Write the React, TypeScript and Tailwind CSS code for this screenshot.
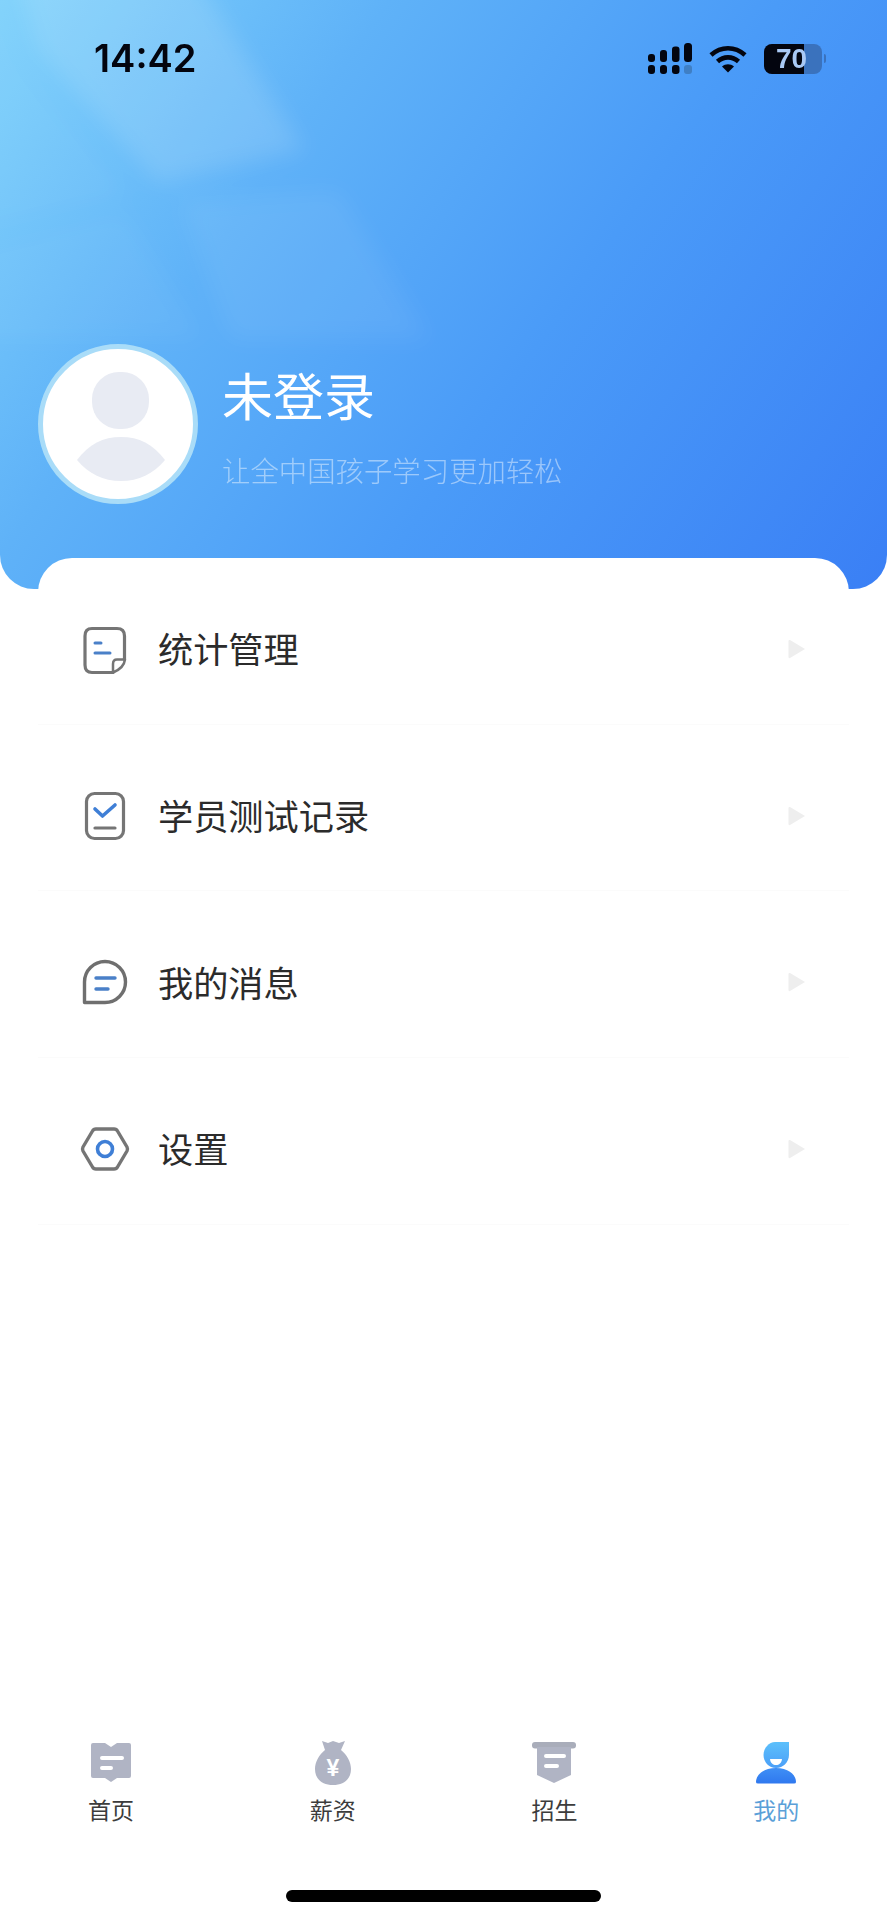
const CJK = 'font-["Noto_Sans_CJK_SC","Noto_Sans",sans-serif]'

function NoteIcon() {
  return (
    <svg className="mt-[3px]" width="46" height="50" viewBox="0 0 46 50" fill="none">
      <path d="M10 3.5H35Q42.5 3.5 42.5 11V34L31 47.5H10Q3 47.5 3 40V11Q3 3.5 10 3.5Z" stroke="#757575" strokeWidth="3.2" strokeLinejoin="round" />
      <path d="M31 47.5V39Q31 34.5 35 34.5H43Q42 43 31 47.5Z" fill="#fff" stroke="#757575" strokeWidth="2.5" strokeLinejoin="round" />
      <path d="M13 18H19M13 28H28" stroke="#4a80c8" strokeWidth="3" strokeLinecap="round" />
    </svg>
  )
}

function CheckIcon() {
  return (
    <svg width="46" height="52" viewBox="0 0 46 52" fill="none">
      <rect x="4.5" y="3.5" width="37" height="45" rx="8" stroke="#757575" strokeWidth="3.2" />
      <path d="M13 19L20.5 26L33 15" stroke="#3f7fd6" strokeWidth="3.6" strokeLinecap="round" strokeLinejoin="round" />
      <path d="M13 38H33" stroke="#757575" strokeWidth="3.2" strokeLinecap="round" />
    </svg>
  )
}

function BubbleIcon() {
  return (
    <svg width="46" height="46" viewBox="0 0 46 46" fill="none">
      <path d="M2.5 43.5V23A20.5 20.5 0 1 1 23 43.5Z" stroke="#6f6f6f" strokeWidth="3.4" strokeLinejoin="round" />
      <path d="M14 19H33M14 30H26" stroke="#4a80c8" strokeWidth="3.4" strokeLinecap="round" />
    </svg>
  )
}

function HexIcon() {
  return (
    <svg width="50" height="46" viewBox="0 0 50 46" fill="none">
      <path d="M3 21L12.5 5Q13.5 3 16 3H34Q36.5 3 37.5 5L47 21Q48 23 47 25L37.5 41Q36.5 43 34 43H16Q13.5 43 12.5 41L3 25Q2 23 3 21Z" stroke="#757575" strokeWidth="3.4" strokeLinejoin="round" />
      <circle cx="25" cy="23" r="7.5" stroke="#3f7fd6" strokeWidth="3.6" />
    </svg>
  )
}

function HomeTabIcon() {
  return (
    <svg width="40" height="40" viewBox="0 0 40 40">
      <path d="M2 0H14L20 4L26 0H38Q40 0 40 2V33Q40 35 38 35H26L20 39L14 35H2Q0 35 0 33V2Q0 0 2 0Z" fill="#b0b4c4" />
      <path d="M11 15H31M11 25H20" stroke="#fff" strokeWidth="4" strokeLinecap="round" />
    </svg>
  )
}

function BagTabIcon() {
  return (
    <svg width="36" height="46" viewBox="0 0 36 46">
      <path d="M7 1L13 3L18 1L24 3L30 1L26 10C32 15 36 22 36 29C36 39 29 45 18 45C7 45 0 39 0 29C0 22 4 15 10 10Z" fill="#b0b4c4" />
      <text x="18" y="36" textAnchor="middle" fontSize="23" fontWeight="700" fill="#fff" fontFamily="Liberation Sans, sans-serif">¥</text>
    </svg>
  )
}

function ShieldTabIcon() {
  return (
    <svg width="44" height="42" viewBox="0 0 44 42">
      <rect x="0" y="0" width="44" height="6.5" rx="3" fill="#a9adba" />
      <path d="M5 5H39V33L22 41L5 33Z" fill="#b0b4c4" />
      <path d="M14 14H32M14 24H25" stroke="#fff" strokeWidth="4" strokeLinecap="round" />
    </svg>
  )
}

function MeTabIcon() {
  return (
    <svg width="40" height="42" viewBox="0 0 40 42">
      <defs>
        <linearGradient id="meHead" x1="0" y1="0" x2="0" y2="1">
          <stop offset="0" stopColor="#5cc0fb" />
          <stop offset="1" stopColor="#4b9ff8" />
        </linearGradient>
        <linearGradient id="meBody" x1="0" y1="0" x2="0" y2="1">
          <stop offset="0" stopColor="#3f8ff5" />
          <stop offset="1" stopColor="#2f78ef" />
        </linearGradient>
      </defs>
      <path d="M19 0H33V13C33 20 27 26 20 26C13 26 7.5 20 7.5 13C7.5 6 13 0 19 0Z" fill="url(#meHead)" />
      <path d="M14 17H26C25.5 21 23 23 20 23C17 23 14.5 21 14 17Z" fill="#fff" />
      <path d="M0 40C0 33 7 26 20 26C33 26 40 33 40 40Q40 41.5 38 41.5H2Q0 41.5 0 40Z" fill="url(#meBody)" />
    </svg>
  )
}

function SignalIcon() {
  return (
    <svg width="44" height="32" viewBox="0 0 44 32" fill="#03050f">
      <rect x="0" y="11" width="7" height="8" rx="3" />
      <rect x="12" y="7" width="7" height="12" rx="3" />
      <rect x="24" y="3.5" width="7.5" height="15.5" rx="3" />
      <rect x="36" y="0" width="8" height="19" rx="3.5" />
      <rect x="0" y="22" width="7" height="9" rx="3" />
      <rect x="12" y="22" width="7" height="9" rx="3" />
      <rect x="24" y="22" width="7.5" height="9" rx="3" />
      <rect x="36" y="22" width="8" height="9" rx="3" fill="#3f7fc4" />
    </svg>
  )
}

function WifiIcon() {
  return (
    <svg width="38" height="28" viewBox="0 0 38 28" fill="none" stroke="#03050f" strokeWidth="4.6">
      <path d="M2 10C12 1 26 1 36 10" />
      <path d="M8.5 16.5C14.5 11 23.5 11 29.5 16.5" />
      <path d="M19 27.5L13 21.5C16.5 18.5 21.5 18.5 25 21.5Z" fill="#03050f" stroke="none" />
    </svg>
  )
}

function Battery() {
  return (
    <div className="flex items-center gap-[2px]">
      <div className="relative flex h-[30px] w-[58px] overflow-hidden rounded-[8px] bg-[#3a72bd]">
        <div className="h-full w-[40px] bg-[#03050f]" />
        <span className="absolute inset-0 flex items-center justify-center pr-[3px] font-['Liberation_Sans',sans-serif] text-[28px] font-bold leading-none text-[#a9c9f5]">70</span>
      </div>
      <div className="h-[9px] w-[2px] rounded-r-sm bg-[#3a72bd]" />
    </div>
  )
}

const MENU = [
  { label: '统计管理', icon: <NoteIcon /> },
  { label: '学员测试记录', icon: <CheckIcon /> },
  { label: '我的消息', icon: <BubbleIcon /> },
  { label: '设置', icon: <HexIcon /> },
]

const TABS = [
  { label: '首页', icon: <HomeTabIcon /> },
  { label: '薪资', icon: <BagTabIcon /> },
  { label: '招生', icon: <ShieldTabIcon /> },
  { label: '我的', icon: <MeTabIcon />, active: true },
]

export default function App() {
  return (
    <div className={`flex min-h-[1920px] w-full flex-col bg-white ${CJK}`}>
      <header className="relative h-[589px] overflow-hidden rounded-b-[34px] bg-[linear-gradient(125deg,#7fd2fb_0%,#5fb2f8_30%,#4a9bf8_60%,#3a7ff5_100%)]">
        {/* window light on the wall */}
        <svg className="absolute inset-0" width="887" height="589" viewBox="0 0 887 589">
          <defs>
            <filter id="soft" x="-30%" y="-30%" width="160%" height="160%">
              <feGaussianBlur stdDeviation="11" />
            </filter>
          </defs>
          <g filter="url(#soft)" fill="#ffffff">
            <polygon points="11,-30 192,-30 305,150 158,183 36,50" opacity="0.13" />
            <polygon points="-30,-30 -5,-30 28,60 130,195 -30,235" opacity="0.04" />
            <polygon points="180,200 339,190 430,340 230,340" opacity="0.06" />
            <polygon points="-30,250 125,212 205,340 -30,340" opacity="0.04" />
          </g>
        </svg>

        <div className="relative flex flex-col">
          <div className="mt-[43px] flex h-[31px] items-center justify-between pl-[94px] pr-[61px]">
            <span className="-mt-[2px] font-['Inter',sans-serif] text-[38px] font-semibold leading-none text-[#03050f]">14:42</span>
            <div className="flex items-center">
              <SignalIcon />
              <div className="mx-[17px]"><WifiIcon /></div>
              <Battery />
            </div>
          </div>

          <div className="ml-[38px] mt-[270px] flex">
            <div className="h-[160px] w-[160px] shrink-0 rounded-full border-[5px] border-[#a9dcf8] bg-white">
              <svg width="150" height="150" viewBox="0 0 150 150">
                <rect x="49" y="23" width="57" height="57" rx="27" fill="#e8ebf3" />
                <path d="M34 111C46 95 60 88 78 88C96 88 110 95 122 111C110 125 96 132 78 132C60 132 46 125 34 111Z" fill="#e8ebf3" />
              </svg>
            </div>
            <div className="ml-[24px] pt-[25px]">
              <div className="text-[51px] leading-[50px] text-white">未登录</div>
              <div className="mt-[37px] text-[28.4px] font-light leading-[28px] text-white/45">让全中国孩子学习更加轻松</div>
            </div>
          </div>
        </div>
      </header>

      <main className="relative mx-[38px] -mt-[31px] rounded-t-[34px] bg-white">
        {MENU.map(item => (
          <div key={item.label} className="flex h-[166.7px] items-center border-b border-[#fbfbfb] pl-[42px] pr-[43px] pt-[16px]">
            <div className="flex w-[50px] justify-center">{item.icon}</div>
            <span className="-mt-[2px] ml-[28px] text-[35.2px] leading-none text-[#2b2b2b]">{item.label}</span>
            <svg className="ml-auto" width="18" height="20" viewBox="0 0 18 20">
              <path d="M2 1L17 10L2 19Q0.5 19.5 0.5 18V2Q0.5 0.5 2 1Z" fill="#eeeeee" />
            </svg>
          </div>
        ))}
      </main>

      <nav className="mt-auto flex flex-col">
        <div className="grid grid-cols-4">
          {TABS.map(tab => (
            <div key={tab.label} className="flex flex-col items-center">
              <div className="flex h-[46px] items-center justify-center">{tab.icon}</div>
              <span className={`mt-[9px] text-[23px] leading-[28px] ${tab.active ? 'text-[#5aa0d8]' : 'text-[#3c3c3c]'}`}>{tab.label}</span>
            </div>
          ))}
        </div>
        <div className="mb-[18px] mt-[67px] h-[12px] w-[315px] self-center rounded-full bg-black" />
      </nav>
    </div>
  )
}
